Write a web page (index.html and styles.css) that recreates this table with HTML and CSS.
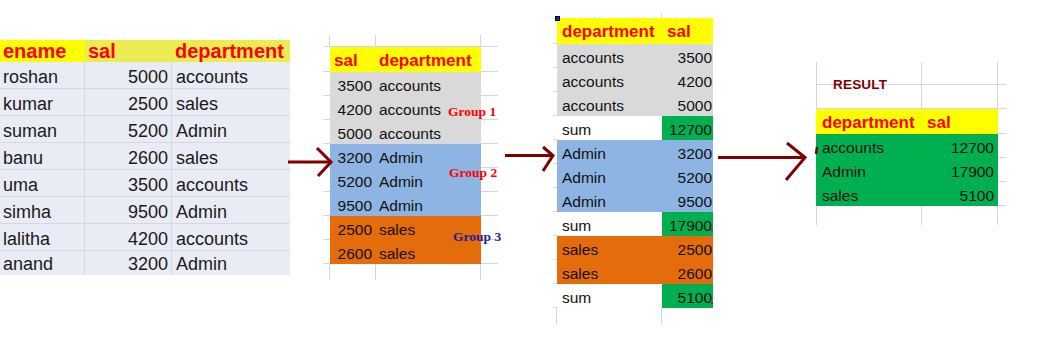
FILE: index.html
```html
<!DOCTYPE html>
<html>
<head>
<meta charset="utf-8">
<link rel="stylesheet" href="styles.css">
</head>
<body>
<div class="canvas">

  <!-- source table -->
  <div class="sheet1">
    <div class="c1 h1 y1 pl">ename</div><div class="c1 h1 y2 pl">sal</div><div class="c1 h1 y2 pl">department</div>
    <div class="c1 lr pl">roshan</div><div class="c1 lr r">5000</div><div class="c1 lb pl">accounts</div>
    <div class="c1 lr pl">kumar</div><div class="c1 lr r">2500</div><div class="c1 lb pl">sales</div>
    <div class="c1 lr pl">suman</div><div class="c1 lr r">5200</div><div class="c1 lb pl">Admin</div>
    <div class="c1 lr pl">banu</div><div class="c1 lr r">2600</div><div class="c1 lb pl">sales</div>
    <div class="c1 lr pl">uma</div><div class="c1 lr r">3500</div><div class="c1 lb pl">accounts</div>
    <div class="c1 lr pl">simha</div><div class="c1 lr r">9500</div><div class="c1 lb pl">Admin</div>
    <div class="c1 lr pl">lalitha</div><div class="c1 lr r">4200</div><div class="c1 lb pl">accounts</div>
    <div class="c1 lr2 pl">anand</div><div class="c1 lr2 r">3200</div><div class="c1 pl">Admin</div>
  </div>

  <!-- grouped table -->
  <div class="sheet2">
    <div class="c gl"></div><div class="c gl"></div><div class="c gl"></div><div class="c gb"></div>
    <div class="c gb"></div><div class="c hd yw p4">sal</div><div class="c hd yw p3">department</div><div class="c gb"></div>
    <div class="c gb"></div><div class="c gy r pr4">3500</div><div class="c gy p3">accounts</div><div class="c gb"></div>
    <div class="c gb"></div><div class="c gy r pr4">4200</div><div class="c gy p3">accounts</div><div class="c gb"></div>
    <div class="c gb"></div><div class="c gy r pr4">5000</div><div class="c gy p3">accounts</div><div class="c gb"></div>
    <div class="c gb"></div><div class="c bl r pr4">3200</div><div class="c bl p3">Admin</div><div class="c gb"></div>
    <div class="c gb"></div><div class="c bl r pr4">5200</div><div class="c bl p3">Admin</div><div class="c gb"></div>
    <div class="c gb"></div><div class="c bl r pr4">9500</div><div class="c bl p3">Admin</div><div class="c gb"></div>
    <div class="c gb"></div><div class="c or r pr4">2500</div><div class="c or p3">sales</div><div class="c gb"></div>
    <div class="c gb"></div><div class="c or r pr4">2600</div><div class="c or p3">sales</div><div class="c gb"></div>
    <div class="c gr"></div><div class="c gr"></div><div class="c gr"></div><div class="c"></div>
    <span class="grp grp1">Group 1</span>
    <span class="grp grp2">Group 2</span>
    <span class="grp grp3">Group 3</span>
  </div>

  <!-- sums table -->
  <div class="sheet3">
    <div class="c"></div><div class="c gr"></div><div class="c"></div>
    <div class="c gb"></div><div class="c hd yw p5">department</div><div class="c hd yw p5">sal</div>
    <div class="c gb"></div><div class="c gy p5">accounts</div><div class="c gy r pr1">3500</div>
    <div class="c gb"></div><div class="c gy p5">accounts</div><div class="c gy r pr1">4200</div>
    <div class="c gb"></div><div class="c gy p5">accounts</div><div class="c gy r pr1">5000</div>
    <div class="c gb"></div><div class="c wt p5">sum</div><div class="c gn r pr1">12700</div>
    <div class="c gb"></div><div class="c bl p5">Admin</div><div class="c bl r pr1">3200</div>
    <div class="c gb"></div><div class="c bl p5">Admin</div><div class="c bl r pr1">5200</div>
    <div class="c gb"></div><div class="c bl p5">Admin</div><div class="c bl r pr1">9500</div>
    <div class="c gb"></div><div class="c wt p5">sum</div><div class="c gn r pr1">17900</div>
    <div class="c gb"></div><div class="c or p5">sales</div><div class="c or r pr1">2500</div>
    <div class="c gb"></div><div class="c or p5">sales</div><div class="c or r pr1">2600</div>
    <div class="c gb"></div><div class="c wt p5">sum</div><div class="c gn r pr1">5100</div>
    <div class="c gr"></div><div class="c gr"></div><div class="c"></div>
    <span class="cellmark"></span>
  </div>

  <!-- result table -->
  <div class="sheet4">
    <div class="c gll"></div><div class="c gl"></div><div class="c gb"></div>
    <div class="c gll"></div><div class="c gl"></div><div class="c gb"></div>
    <div class="c hd yw p6">department</div><div class="c hd yw p5">sal</div><div class="c gb"></div>
    <div class="c gn p6">accounts</div><div class="c gn r pr4">12700</div><div class="c gb"></div>
    <div class="c gn p6">Admin</div><div class="c gn r pr4">17900</div><div class="c gb"></div>
    <div class="c gn p6">sales</div><div class="c gn r pr4">5100</div><div class="c gb"></div>
    <div class="c glr"></div><div class="c gr"></div><div class="c"></div>
    <span class="result">RESULT</span>
  </div>

  <!-- connecting arrows -->
  <svg class="arrows" width="1044" height="339" viewBox="0 0 1044 339">
    <g fill="none" stroke="#800000" stroke-width="3">
      <path d="M288 162 H331"/>
      <path d="M317 148 L331 162 L318 176"/>
      <path d="M505 155.5 H553"/>
      <path d="M543 147 L553 155.5 L543 171"/>
      <path d="M718 157.5 H805"/>
      <path d="M787 143 L805 157.5 L786 180"/>
      <path d="M817 147 L816 154" stroke-width="2.5"/>
    </g>
    <g fill="#d01010">
      <rect x="711" y="229" width="2" height="2"/>
      <rect x="711" y="302" width="2" height="2"/>
    </g>
  </svg>
</div>
</body>
</html>
```

FILE: styles.css
```css
html, body {
  margin: 0;
  padding: 0;
  background: #ffffff;
}

.canvas {
  position: relative;
  width: 1044px;
  height: 339px;
  overflow: hidden;
  font-family: "Liberation Sans", Arial, sans-serif;
  color: #111111;
}

/* ---------- table 1 ---------- */
.sheet1 {
  position: absolute;
  left: 0;
  top: 40px;
  display: grid;
  grid-template-columns: 85px 87px 118px;
  grid-template-rows: 22px repeat(7, 27px) 24px;
  background: #e9ebf5;
  font-size: 18px;
  color: #1a1a1a;
}

.c1 {
  display: flex;
  align-items: center;
  padding-top: 3px;
  box-sizing: border-box;
  white-space: nowrap;
}

.h1 {
  font-weight: bold;
  font-size: 20px;
  color: #ff0000;
  padding-top: 0;
}

.y1 { background: #ffff00; }
.y2 { background: #ebeb52; }

.lr { box-shadow: inset -1px -1px 0 #d2d8e8; }
.lb { box-shadow: inset 0 -1px 0 #d2d8e8; }
.lr2 { box-shadow: inset -1px 0 0 #d2d8e8; }

.pl { padding-left: 3px; }
.c1.r { justify-content: flex-end; padding-right: 4px; }
.c1.pl + .c1.r + .c1.pl { padding-left: 4px; }

/* ---------- shared spreadsheet cells ---------- */
.c {
  display: flex;
  align-items: center;
  box-sizing: border-box;
  white-space: nowrap;
  font-size: 15.5px;
  padding-top: 3px;
}

.gl { box-shadow: inset -1px -1px 0 #d0d7e5; }
.gr { box-shadow: inset -1px 0 0 #d0d7e5; }
.gb { box-shadow: inset 0 -1px 0 #d0d7e5; }
.gll { box-shadow: inset 1px 0 0 #d0d7e5, inset -1px -1px 0 #d0d7e5; }
.glr { box-shadow: inset 1px 0 0 #d0d7e5, inset -1px 0 0 #d0d7e5; }

.hd {
  font-weight: bold;
  font-size: 17px;
  color: #ff0000;
  padding-top: 2px;
}

.yw { background: #ffff00; }
.gy { background: #d9d9d9; }
.bl { background: #8db4e2; }
.or { background: #e46c0a; }
.gn { background: #00b050; }
.wt { background: #ffffff; }

.r { justify-content: flex-end; }
.p3 { padding-left: 3px; }
.p4 { padding-left: 4px; }
.p5 { padding-left: 5px; }
.p6 { padding-left: 6px; }
.pr1 { padding-right: 1px; }
.pr4 { padding-right: 4px; }

/* ---------- table 2 ---------- */
.sheet2 {
  position: absolute;
  left: 323px;
  top: 35px;
  display: grid;
  grid-template-columns: 7px 46px 105px 17px;
  grid-template-rows: 12px 25px repeat(8, 24px) 16px;
}

.grp {
  position: absolute;
  font-family: "Liberation Serif", "Times New Roman", serif;
  font-weight: bold;
  font-size: 13.5px;
  line-height: 13px;
  white-space: nowrap;
}

.grp1 { left: 125px; top: 70px; color: #ff0000; }
.grp2 { left: 126px; top: 131px; color: #ff0000; }
.grp3 { left: 130px; top: 195px; color: #1f1f9a; }

/* ---------- table 3 ---------- */
.sheet3 {
  position: absolute;
  left: 553px;
  top: 13px;
  display: grid;
  grid-template-columns: 4px 105px 51px;
  grid-template-rows: 5px 26px repeat(11, 24px) 17px;
}

.cellmark {
  position: absolute;
  left: 2px;
  top: 3px;
  width: 3px;
  height: 3px;
  background: #1c2aa8;
  border: 1px solid #000033;
}

/* ---------- table 4 ---------- */
.sheet4 {
  position: absolute;
  left: 816px;
  top: 62px;
  display: grid;
  grid-template-columns: 106px 76px 8px;
  grid-template-rows: 23px 24px 25px repeat(3, 24px) 19px;
}

.result {
  position: absolute;
  left: 17px;
  top: 16px;
  font-weight: bold;
  font-size: 13.5px;
  line-height: 1;
  letter-spacing: 0.2px;
  color: #7f0000;
}

/* ---------- arrows ---------- */
.arrows {
  position: absolute;
  left: 0;
  top: 0;
}
```
